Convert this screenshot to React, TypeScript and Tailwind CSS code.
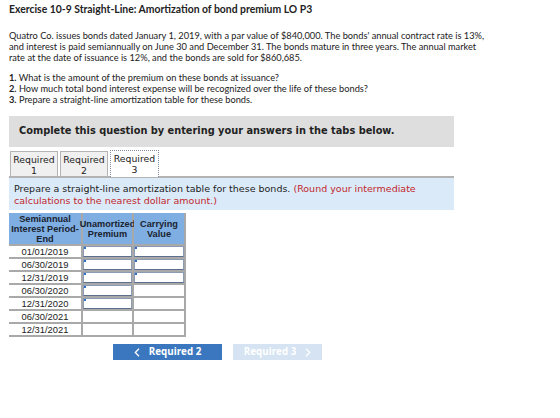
import React from "react";

const dates = [
  "01/01/2019",
  "06/30/2019",
  "12/31/2019",
  "06/30/2020",
  "12/31/2020",
  "06/30/2021",
  "12/31/2021",
];

// which cells in each row are editable: [unamortized, carrying]
const editable: [boolean, boolean][] = [
  [true, true],
  [true, true],
  [true, true],
  [true, false],
  [true, false],
  [false, false],
  [false, false],
];

const InputCell: React.FC<{ active: boolean }> = ({ active }) => (
  <div className="h-[13px] border-r-2 border-b-2 border-[#a9a9a9] bg-white relative">
    {active && (
      <div className="absolute inset-0 border border-[#8a9bb3] border-b-[#5c6f8c]">
        <div className="absolute left-0 top-0 w-[2px] h-[2px] bg-[#2f6fc4]" />
      </div>
    )}
  </div>
);

const App: React.FC = () => {
  return (
    <div className="w-[560px] h-[418px] bg-white text-[#222] overflow-hidden">
      <div className="px-[9px] pt-[2px]" style={{ fontFamily: "Lato, 'Open Sans', sans-serif" }}>
        <h1 className="text-[10.4px] font-bold leading-[14px]">
          Exercise 10-9 Straight-Line: Amortization of bond premium LO P3
        </h1>
        <p className="mt-[14px] text-[9.25px] leading-[11px]">
          Quatro Co. issues bonds dated January 1, 2019, with a par value of $840,000. The bonds' annual contract rate is 13%,
          <br />
          and interest is paid semiannually on June 30 and December 31. The bonds mature in three years. The annual market
          <br />
          rate at the date of issuance is 12%, and the bonds are sold for $860,685.
        </p>
        <div className="mt-[9px] text-[9.25px] leading-[11px]">
          <p>
            <b>1.</b> What is the amount of the premium on these bonds at issuance?
          </p>
          <p>
            <b>2.</b> How much total bond interest expense will be recognized over the life of these bonds?
          </p>
          <p>
            <b>3.</b> Prepare a straight-line amortization table for these bonds.
          </p>
        </div>
      </div>

      <div className="ml-[9px] w-[445px]" style={{ fontFamily: "'DejaVu Sans', Verdana, sans-serif" }}>
        <div className="mt-[11px] h-[31px] bg-[#dedede] flex items-center pl-[10px] text-[9.8px] font-bold">
          Complete this question by entering your answers in the tabs below.
        </div>

        <div className="mt-[3px] flex gap-[2px] pl-[1px] text-[9.3px] leading-[11px]">
          {["1", "2", "3"].map((n) => (
            <div
              key={n}
              className={
                n === "3"
                  ? "w-[49px] h-[27px] bg-white border border-dotted border-[#7d8da8] border-b-0 flex flex-col items-center pt-[2px] -mb-[2px] relative z-10"
                  : "w-[48px] h-[25px] bg-[#f0f0f0] border border-[#b4b4b4] border-b-0 flex flex-col items-center pt-[2px] mt-[1px]"
              }
            >
              <span>Required</span>
              <span>{n}</span>
            </div>
          ))}
        </div>

        <div className="border-t-2 border-[#b3b3b3] bg-[#dbeaf8] h-[34px] pl-[5px] pt-[5px] text-[9.5px] leading-[12px]">
          <div>
            Prepare a straight-line amortization table for these bonds.{" "}
            <span className="text-[#c1272d]">(Round your intermediate</span>
          </div>
          <div className="text-[#c1272d]">calculations to the nearest dollar amount.)</div>
        </div>
      </div>

      <div
        className="ml-[9px] mt-[3px] w-[177px] grid grid-cols-[74px_51px_52px]"
        style={{ fontFamily: "'Liberation Sans', Arial, sans-serif" }}
      >
        <div className="h-[33px] bg-[#7eaee2] border-r-2 border-b-2 border-[#a9a9a9] flex items-center justify-center text-center text-[9.2px] font-bold leading-[10px] text-[#1a2330]">
          Semiannual
          <br />
          Interest Period-
          <br />
          End
        </div>
        <div className="h-[33px] bg-[#7eaee2] border-r-2 border-b-2 border-[#a9a9a9] flex items-center justify-center text-center text-[9.2px] font-bold leading-[10px] text-[#1a2330] whitespace-nowrap">
          Unamortized
          <br />
          Premium
        </div>
        <div className="h-[33px] bg-[#7eaee2] border-r-2 border-b-2 border-[#a9a9a9] flex items-center justify-center text-center text-[9.2px] font-bold leading-[10px] text-[#1a2330]">
          Carrying
          <br />
          Value
        </div>

        {dates.map((d, i) => (
          <React.Fragment key={d}>
            <div className="h-[13px] border-r-2 border-b-2 border-[#a9a9a9] bg-white flex items-center justify-center text-[9.4px] leading-none">
              {d}
            </div>
            <InputCell active={editable[i][0]} />
            <InputCell active={editable[i][1]} />
          </React.Fragment>
        ))}
      </div>

      <div className="mt-[7px] ml-[113px] flex gap-[11px] text-[9.8px] font-bold" style={{ fontFamily: "'Open Sans', Lato, sans-serif" }}>
        <button className="w-[109px] h-[16px] bg-[#3b77be] text-white flex items-center justify-center gap-[9px]">
          <svg width="6" height="9" viewBox="0 0 6 9" fill="none" stroke="white" strokeWidth="1.3">
            <path d="M5 0.8L1.3 4.5L5 8.2" />
          </svg>
          <span>Required 2</span>
        </button>
        <button className="w-[89px] h-[16px] bg-[#d5e3f2] text-white flex items-center justify-center gap-[9px]">
          <span>Required 3</span>
          <svg width="6" height="9" viewBox="0 0 6 9" fill="none" stroke="white" strokeWidth="1.3">
            <path d="M1 0.8L4.7 4.5L1 8.2" />
          </svg>
        </button>
      </div>
    </div>
  );
};

export default App;
